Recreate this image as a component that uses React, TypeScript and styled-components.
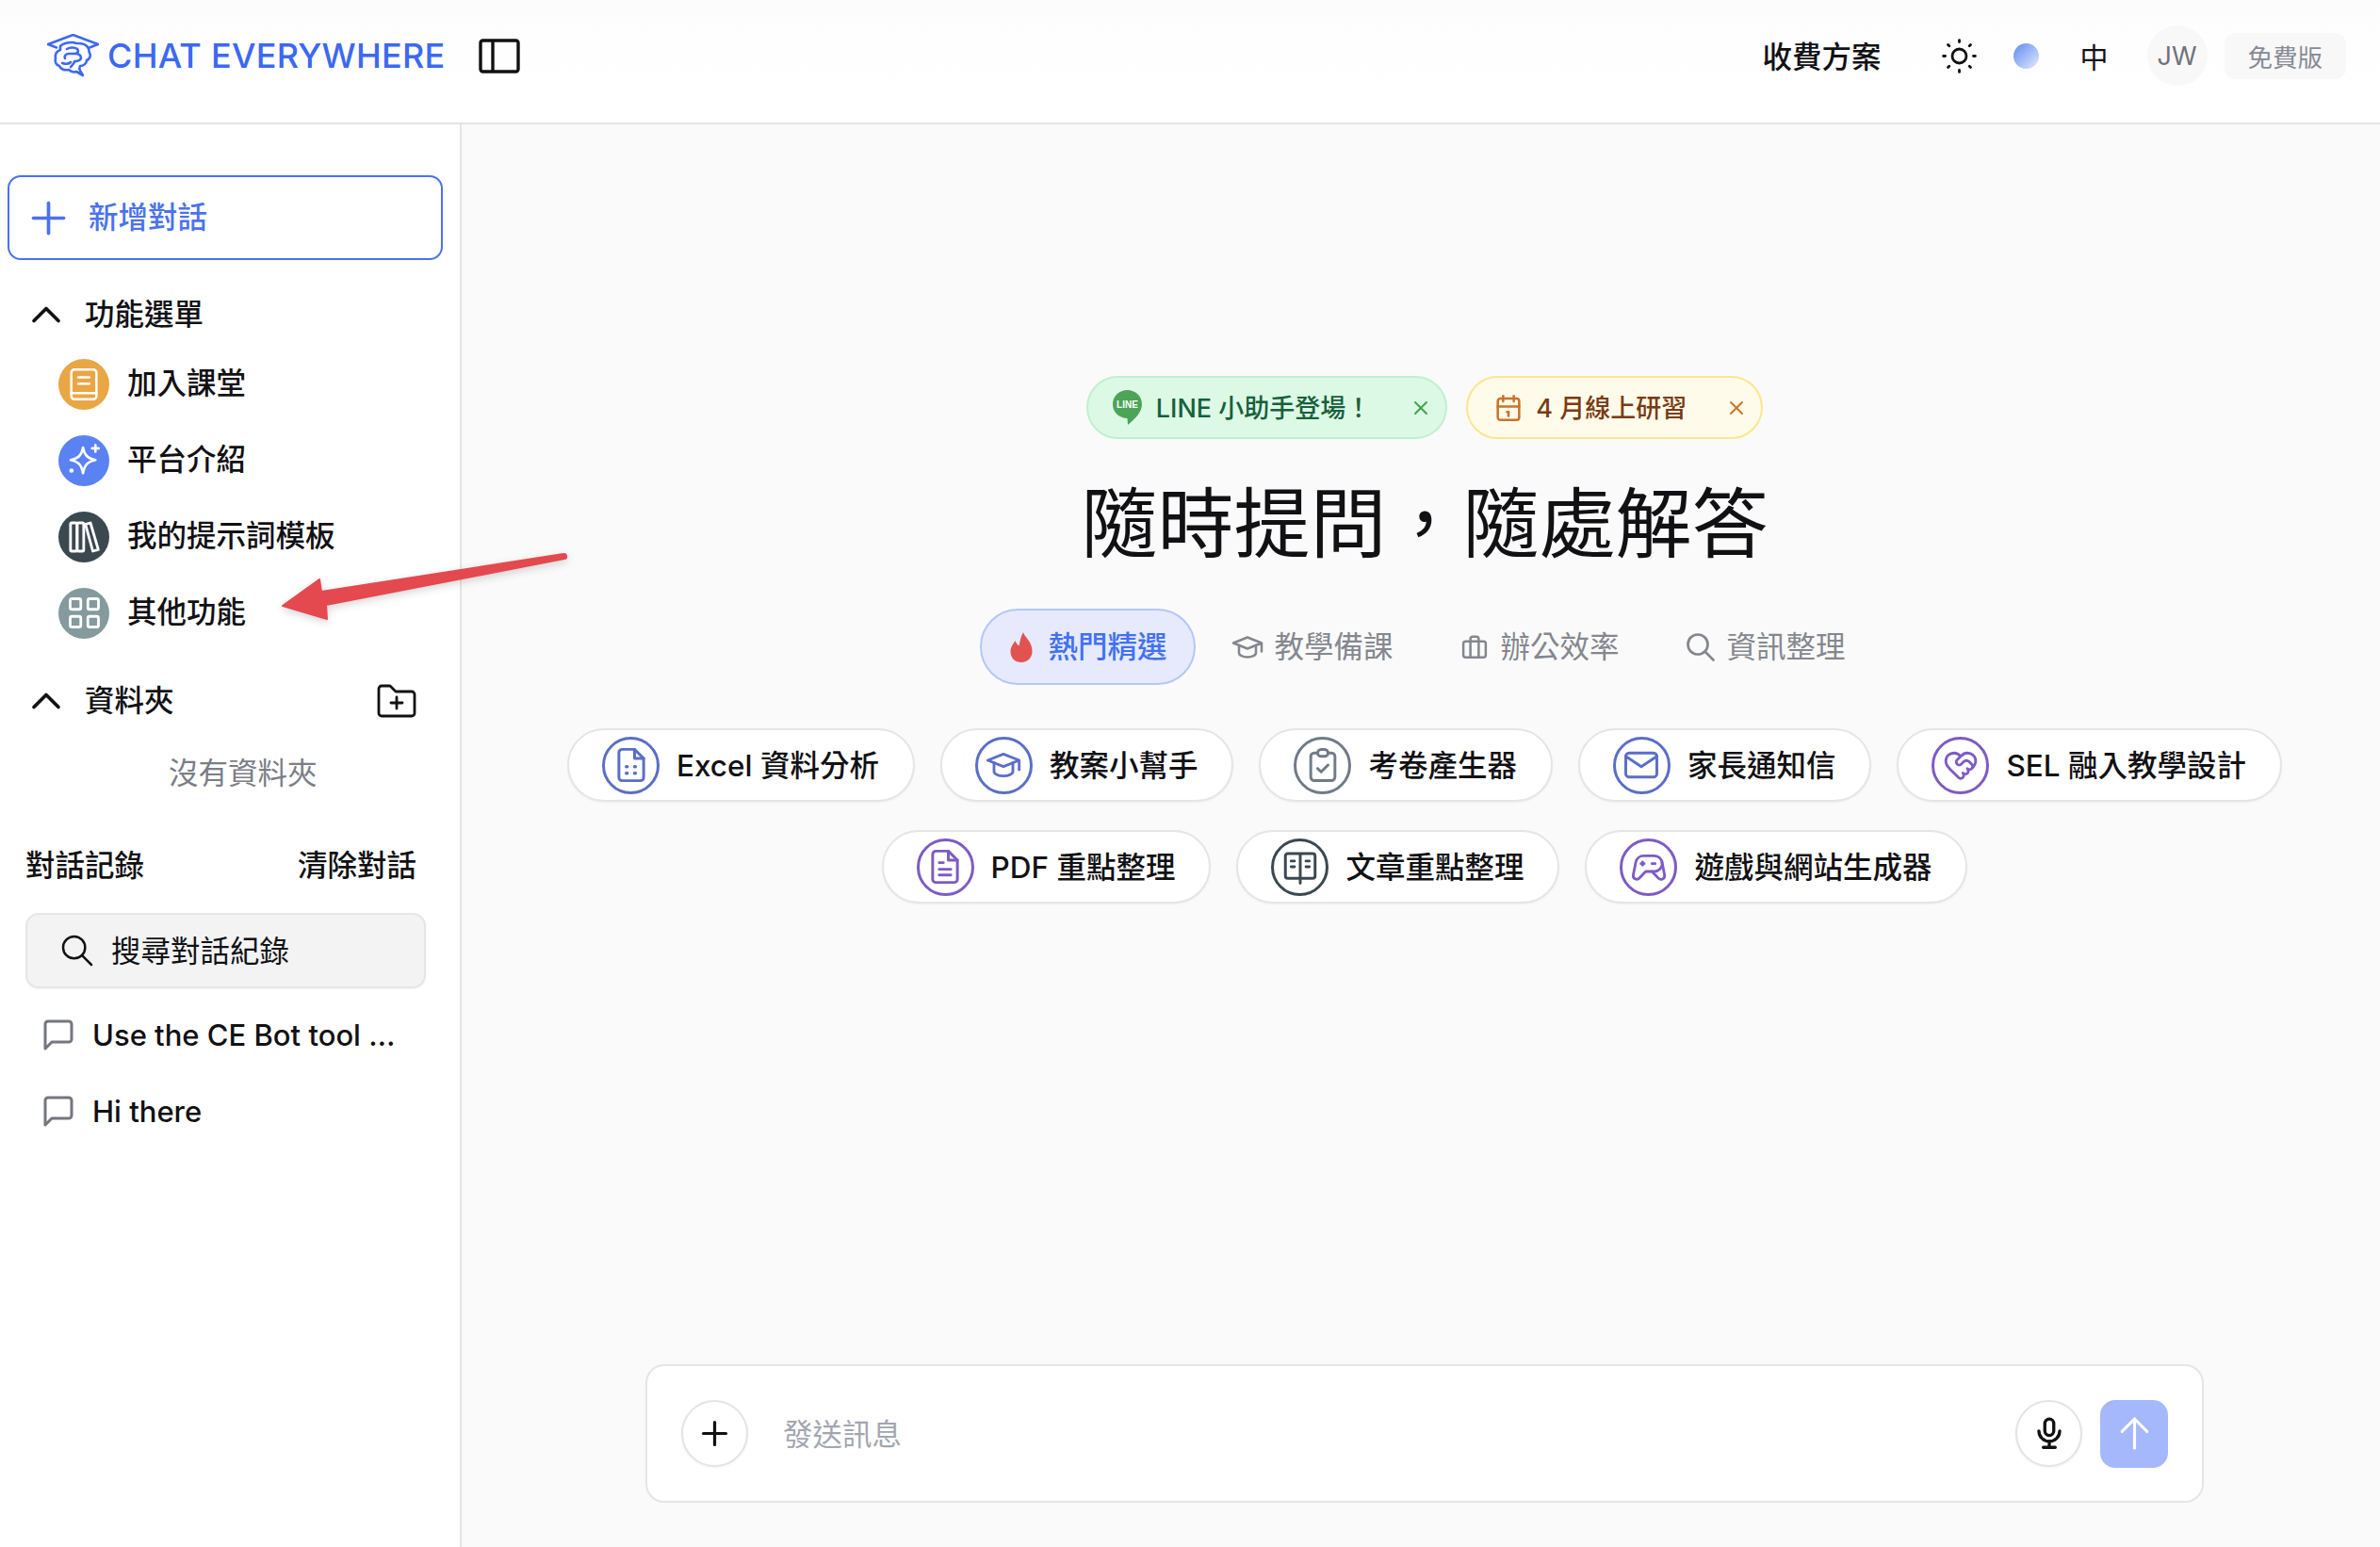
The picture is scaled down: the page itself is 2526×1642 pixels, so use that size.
import React from 'react';
import styled, { createGlobalStyle } from 'styled-components';
import {
  TbPlus,
  TbChevronUp,
  TbSearch,
  TbSun,
  TbX,
  TbCalendar,
  TbSchool,
  TbClipboardCheck,
  TbMail,
  TbDeviceGamepad2,
  TbMicrophone,
  TbArrowUp,
  TbLayoutGrid,
} from 'react-icons/tb';
import { HeartHandshake } from 'lucide-react';

const GlobalStyle = createGlobalStyle`
  html, body, #root { margin: 0; padding: 0; height: 100%; }
  body {
    font-family: Inter, "Noto Sans CJK TC", sans-serif;
    font-size: 31.5px;
    color: #111114;
    background: #fafafa;
    overflow: hidden;
  }
  * { box-sizing: border-box; }
  svg { flex-shrink: 0; }
`;

const Label = styled.span<{ $lift: number }>`
  margin-bottom: ${({ $lift }) => $lift * 2}px;
  white-space: nowrap;
`;

const Page = styled.div`
  display: flex;
  flex-direction: column;
  height: 1642px;
`;

const Header = styled.header`
  flex: 0 0 132px;
  display: flex;
  align-items: center;
  justify-content: space-between;
  padding: 0 36px 12px 50px;
  background: linear-gradient(180deg, #fcfcfc 0%, #fefefe 30%, #ffffff 100%);
  border-bottom: 2px solid #e5e5e5;
`;

const Brand = styled.div`
  display: flex;
  align-items: center;
`;

const LogoText = styled.span`
  margin-left: 9px;
  font-size: 36px;
  font-weight: 500;
  color: #3c68f3;
  letter-spacing: 0.25px;
  white-space: nowrap;
`;

const ToggleIcon = styled.svg`
  margin-left: 35px;
  display: block;
`;

const HeaderRight = styled.div`
  display: flex;
  align-items: center;
`;

const PlanLink = styled(Label)`
  font-weight: 500;
  margin-right: 60px;
`;

const SunWrap = styled.span`
  display: flex;
  margin-right: 35px;
`;

const Dot = styled.span`
  width: 27px;
  height: 27px;
  border-radius: 50%;
  background: linear-gradient(135deg, #5f8bee 0%, #e3eafd 100%);
  margin-right: 44px;
`;

const LangLabel = styled.span`
  font-size: 30px;
  margin-right: 41px;
`;

const Avatar = styled.span`
  width: 64px;
  height: 64px;
  border-radius: 50%;
  background: #f8f8f9;
  color: #70727b;
  font-size: 27px;
  display: flex;
  align-items: center;
  justify-content: center;
  margin-right: 18px;
`;

const PlanBadge = styled.span`
  height: 49px;
  padding: 0 25px;
  border-radius: 12px;
  background: #f8f8f9;
  color: #878a94;
  font-size: 26.5px;
  display: flex;
  align-items: center;
`;

const Body = styled.div`
  flex: 1;
  display: flex;
  min-height: 0;
  position: relative;
`;

const Sidebar = styled.aside`
  flex: 0 0 490px;
  display: flex;
  flex-direction: column;
  padding: 54px 0 0 8px;
  background: #ffffff;
  border-right: 2px solid #e5e5e5;
`;

const NewChatButton = styled.button`
  width: 462px;
  height: 90px;
  display: flex;
  align-items: center;
  gap: 15px;
  padding: 0 0 0 14px;
  background: #fff;
  border: 2.5px solid #4a72ef;
  border-radius: 14px;
  color: #4a72ef;
  font: inherit;
  font-weight: 500;
`;

const SectionRow = styled.div<{ $top: number }>`
  height: 50px;
  margin-top: ${({ $top }) => $top}px;
  display: flex;
  align-items: center;
  gap: 15px;
  padding: 0 24px 0 15px;
  width: 458px;
  font-weight: 500;
`;

const SectionTitle = styled(Label)`
  flex: 1;
`;

const MenuList = styled.div`
  margin-top: 8px;
  display: flex;
  flex-direction: column;
`;

const MenuItem = styled.div`
  height: 81px;
  display: flex;
  align-items: center;
  gap: 19px;
  padding-left: 54px;
  font-weight: 500;
`;

const MenuBadge = styled.span<{ $bg: string }>`
  width: 54px;
  height: 54px;
  border-radius: 50%;
  background: ${({ $bg }) => $bg};
  color: #fff;
  display: flex;
  align-items: center;
  justify-content: center;
`;

const EmptyFolders = styled.div`
  height: 50px;
  margin-top: 26px;
  padding-left: 171px;
  display: flex;
  align-items: center;
  color: #7b7e87;
`;

const HistoryHead = styled.div`
  height: 50px;
  margin-top: 48px;
  width: 434px;
  padding-left: 19px;
  display: flex;
  align-items: center;
  justify-content: space-between;
  font-weight: 500;
`;

const SearchBox = styled.div`
  margin: 26px 0 0 19px;
  width: 425px;
  height: 80px;
  display: flex;
  align-items: center;
  gap: 16px;
  padding-left: 33px;
  background: #f3f3f4;
  border: 2px solid #e6e6e7;
  border-radius: 14px;
  box-shadow: 0 1px 2px rgba(0, 0, 0, 0.05);
`;

const ChatList = styled.div`
  margin-top: 9px;
  display: flex;
  flex-direction: column;
`;

const ChatItem = styled.div`
  height: 81px;
  display: flex;
  align-items: center;
  gap: 20px;
  padding-left: 38px;
`;

const ChatTitle = styled.span`
  font-size: 31px;
  font-weight: 500;
  white-space: nowrap;
`;

const Main = styled.main`
  flex: 1;
  display: flex;
  flex-direction: column;
  align-items: center;
  padding: 267px 0 47px 8px;
  background: #fafafa;
`;

const BannerRow = styled.div`
  display: flex;
  gap: 20px;
`;

const Banner = styled.div<{ $bg: string; $border: string; $fg: string }>`
  height: 67px;
  display: flex;
  align-items: center;
  padding: 0 14px 0 26px;
  border-radius: 34px;
  background: ${({ $bg }) => $bg};
  border: 2px solid ${({ $border }) => $border};
  color: ${({ $fg }) => $fg};
  font-size: 27px;
  font-weight: 500;
`;

const BannerText = styled.span<{ $left: number; $right: number }>`
  margin: 0 ${({ $right }) => $right}px 2px ${({ $left }) => $left}px;
  white-space: nowrap;
`;

const Title = styled.h1`
  margin: 40px 0 0;
  height: 100px;
  line-height: 100px;
  font-size: 81px;
  font-weight: 400;
  color: #111114;
`;

const Tabs = styled.div`
  margin: 40px 0 0 6px;
  display: flex;
  gap: 11px;
`;

const Tab = styled.div<{ $active?: boolean }>`
  height: 81px;
  display: flex;
  align-items: center;
  gap: 13px;
  padding: 0 29px 0 27px;
  border-radius: 41px;
  border: 2px solid ${({ $active }) => ($active ? '#b4c6fa' : 'transparent')};
  background: ${({ $active }) => ($active ? '#e6eafc' : 'transparent')};
  color: ${({ $active }) => ($active ? '#4270f4' : '#85878f')};
  font-weight: ${({ $active }) => ($active ? 500 : 400)};
`;

const TabIcon = styled.span`
  width: 30px;
  display: flex;
  justify-content: center;
`;

const ChipRows = styled.div`
  margin-top: 46px;
  display: flex;
  flex-direction: column;
  gap: 30px;
`;

const ChipRow = styled.div`
  display: flex;
  justify-content: center;
  gap: 27px;
`;

const Chip = styled.div`
  height: 78px;
  display: flex;
  align-items: center;
  gap: 18px;
  padding: 0 36px 0 35px;
  background: #fff;
  border: 2px solid #e5e5e5;
  border-radius: 39px;
  font-weight: 500;
  white-space: nowrap;
  box-shadow: 0 1px 2px rgba(0, 0, 0, 0.05);
`;

const ChipIcon = styled.span<{ $color: string }>`
  width: 61px;
  height: 61px;
  border-radius: 50%;
  border: 3px solid ${({ $color }) => $color};
  color: ${({ $color }) => $color};
  display: flex;
  align-items: center;
  justify-content: center;
`;

const Composer = styled.div`
  margin-top: auto;
  width: 1654px;
  height: 147px;
  display: flex;
  align-items: center;
  padding: 0 36px;
  background: #fff;
  border: 2px solid #e5e5e5;
  border-radius: 20px;
`;

const RoundButton = styled.span`
  width: 71px;
  height: 71px;
  border-radius: 50%;
  border: 2px solid #e4e4e4;
  background: #fff;
  box-shadow: 0 1px 3px rgba(0, 0, 0, 0.06);
  display: flex;
  align-items: center;
  justify-content: center;
`;

const Placeholder = styled(Label)`
  flex: 1;
  margin-left: 37px;
  color: #a3a6b0;
`;

const SendButton = styled.span`
  margin-left: 19px;
  width: 72px;
  height: 72px;
  border-radius: 16px;
  background: #a5b8fb;
  color: #fff;
  display: flex;
  align-items: center;
  justify-content: center;
`;

const Annotation = styled.svg`
  position: absolute;
  left: 290px;
  top: 440px;
  filter: drop-shadow(0 3px 4px rgba(0, 0, 0, 0.16));
`;

const LogoMark = () => (
  <svg width="55" height="46" viewBox="0 0 55 46" fill="none" stroke="#3c68f3" strokeWidth="2.6" strokeLinejoin="round" strokeLinecap="round">
    <path d="M1 11 27.500 1 54 11l-9 3.500M1 11l9 3.500" />
    <path d="M14 13c3-3 8-4 13-4 2 0 3 1 6 1 5 0 8 1 10 4 2 2 1 4 2 6 2 3 0 7-3 8 0 3-3 6-7 6-1 2-1 3 0 5l3 5-7-4c-3 1-6 0-8-2-5 1-9-1-10-4-4-1-5-5-4-8-1-4 1-8 5-9z" />
    <path d="M21 16c3-2 8-2 11 0M32 16c2 2 1 4-2 5l-7 0M23 21c-3 0-5 2-4 5M30 21c4 0 6 2 6 5-1 2-3 3-6 3M16 31c3 1 7 1 9-1M29 29c0 2-2 4-4 6" />
  </svg>
);

const PanelIcon = () => (
  <ToggleIcon width="44" height="37" viewBox="0 0 44 37" fill="none" stroke="#111" strokeWidth="3.4" strokeLinejoin="round">
    <rect x="2" y="2" width="40" height="33" rx="2.500" />
    <path d="M15 2v33" />
  </ToggleIcon>
);

const BookIcon = () => (
  <svg width="40" height="40" viewBox="0 0 24 24" fill="none" stroke="currentColor" strokeWidth="1.5" strokeLinecap="round" strokeLinejoin="round">
    <rect x="4" y="2.500" width="16" height="19" rx="2" />
    <path d="M4 17.500h16M8.500 7.500h7M8.500 11.500h7" />
  </svg>
);

const SparkIcon = () => (
  <svg width="42" height="42" viewBox="0 0 24 24" fill="none" stroke="currentColor" strokeWidth="1.5" strokeLinecap="round" strokeLinejoin="round">
    <path d="M11.500 4c.9 4.600 2.700 6.600 7.500 7.600-4.800 1-6.600 3-7.500 8-.9-5-2.700-7-7.500-8 4.800-1 6.600-3 7.500-7.600z" />
    <path d="M19 2.500v4M17 4.500h4" />
    <circle cx="4.500" cy="18" r=".6" fill="currentColor" />
  </svg>
);

const BooksIcon = () => (
  <svg width="40" height="40" viewBox="0 0 24 24" fill="none" stroke="currentColor" strokeWidth="1.7" strokeLinecap="round" strokeLinejoin="round">
    <rect x="3.500" y="3" width="4.200" height="18" rx=".8" />
    <rect x="7.700" y="3" width="4.200" height="18" rx=".8" />
    <path d="M13 3.800l3.200-.8 5 17-3.500 1z" />
  </svg>
);

const FolderIcon = () => (
  <svg width="42" height="36" viewBox="0 0 42 36" fill="none" stroke="#111" strokeWidth="2.800" strokeLinejoin="round" strokeLinecap="round">
    <path d="M2 5a3 3 0 0 1 3-3h9l6 6h17a3 3 0 0 1 3 3v20a3 3 0 0 1-3 3H5a3 3 0 0 1-3-3z" />
    <path d="M21 14v12M15 20h12" />
  </svg>
);

const ChatBubble = () => (
  <svg width="32" height="34" viewBox="0 0 32 34" fill="none" stroke="#75767f" strokeWidth="3" strokeLinejoin="round">
    <path d="M2 31V5a3 3 0 0 1 3-3h22a3 3 0 0 1 3 3v16a3 3 0 0 1-3 3H9z" />
  </svg>
);

const LineIcon = () => (
  <svg width="31" height="37" viewBox="0 0 31 37">
    <path d="M15.500 0C24 0 31 6.500 31 15c0 9-8 16-15 22l-.5-7C7 30 0 23.500 0 15 0 6.500 7 0 15.500 0z" fill="#4ca456" />
    <text x="15.500" y="19" textAnchor="middle" fontFamily="Liberation Sans, sans-serif" fontSize="10" fontWeight="700" fill="#fff">LINE</text>
  </svg>
);

const FlameIcon = () => (
  <svg width="24" height="32" viewBox="0 0 24 32">
    <path d="M14 0c1 5 9 9 9.500 19.500C24 27 18.500 32 12 32S.5 27.500.5 20.500C.5 15 4 12 5.500 9c1 2.500 2 4.500 4 5.500C10.500 10 11.500 4.500 14 0z" fill="#e2524f" />
  </svg>
);

const CaseIcon = () => (
  <svg width="30" height="30" viewBox="0 0 24 24" fill="none" stroke="currentColor" strokeWidth="2" strokeLinejoin="round">
    <rect x="2.500" y="7" width="19" height="13.500" rx="2" />
    <path d="M8.500 7V5a2 2 0 0 1 2-2h3a2 2 0 0 1 2 2v2M8.500 7v13.500M15.500 7v13.500" />
  </svg>
);

const SheetFileIcon = () => (
  <svg width="42" height="42" viewBox="0 0 24 24" fill="none" stroke="currentColor" strokeWidth="1.7" strokeLinecap="round" strokeLinejoin="round">
    <path d="M14 2.500H6.500a2 2 0 0 0-2 2v15a2 2 0 0 0 2 2h11a2 2 0 0 0 2-2V8z" />
    <path d="M14 2.500V8h5.500" />
    <path d="M9 13h.5M14 13h.5M9 17h.5M14 17h.5" strokeWidth="2" />
  </svg>
);

const TextFileIcon = () => (
  <svg width="42" height="42" viewBox="0 0 24 24" fill="none" stroke="currentColor" strokeWidth="1.7" strokeLinecap="round" strokeLinejoin="round">
    <path d="M14 2.500H6.500a2 2 0 0 0-2 2v15a2 2 0 0 0 2 2h11a2 2 0 0 0 2-2V8z" />
    <path d="M14 2.500V8h5.500" />
    <path d="M8.500 9.500H11M8.500 13.500h7M8.500 17h7" />
  </svg>
);

const OpenBookIcon = () => (
  <svg width="42" height="42" viewBox="0 0 24 24" fill="none" stroke="currentColor" strokeWidth="1.7" strokeLinecap="round" strokeLinejoin="round">
    <path d="M12 19H4.500a1.500 1.500 0 0 1-1.500-1.500v-12A1.500 1.500 0 0 1 4.500 4H12zM12 19h7.500a1.500 1.500 0 0 0 1.500-1.500v-12A1.500 1.500 0 0 0 19.500 4H12zM12 19v3" />
    <path d="M6.500 8.500h2M6.500 12h2M15.500 8.500h2M15.500 12h2" />
  </svg>
);

const features = [
  { label: '加入課堂', bg: '#e9a645', icon: <BookIcon /> },
  { label: '平台介紹', bg: '#5b82f2', icon: <SparkIcon /> },
  { label: '我的提示詞模板', bg: '#3c4850', icon: <BooksIcon /> },
  { label: '其他功能', bg: '#849a9c', icon: <TbLayoutGrid size={45} strokeWidth={1.5} /> },
];

const BLUE = '#5a6ec9';
const PURPLE = '#7d5bc4';

const firstRow = [
  { label: 'Excel 資料分析', color: BLUE, icon: <SheetFileIcon /> },
  { label: '教案小幫手', color: BLUE, icon: <TbSchool size={40} strokeWidth={1.7} /> },
  { label: '考卷產生器', color: '#6f7b87', icon: <TbClipboardCheck size={44} strokeWidth={1.6} /> },
  { label: '家長通知信', color: BLUE, icon: <TbMail size={44} strokeWidth={1.6} /> },
  { label: 'SEL 融入教學設計', color: PURPLE, icon: <HeartHandshake size={38} strokeWidth={1.8} /> },
];

const secondRow = [
  { label: 'PDF 重點整理', color: PURPLE, icon: <TextFileIcon /> },
  { label: '文章重點整理', color: '#3c4850', icon: <OpenBookIcon /> },
  { label: '遊戲與網站生成器', color: PURPLE, icon: <TbDeviceGamepad2 size={40} strokeWidth={1.7} /> },
];

const App = () => (
  <>
    <GlobalStyle />
    <Page>
      <Header>
        <Brand>
          <LogoMark />
          <LogoText>CHAT EVERYWHERE</LogoText>
          <PanelIcon />
        </Brand>
        <HeaderRight>
          <PlanLink $lift={1}>收費方案</PlanLink>
          <SunWrap>
            <TbSun size={45} strokeWidth={1.5} />
          </SunWrap>
          <Dot />
          <LangLabel>中</LangLabel>
          <Avatar>JW</Avatar>
          <PlanBadge>免費版</PlanBadge>
        </HeaderRight>
      </Header>

      <Body>
        <Sidebar>
          <NewChatButton>
            <TbPlus size={55} strokeWidth={1.6} />
            <Label $lift={3}>新增對話</Label>
          </NewChatButton>

          <SectionRow $top={33}>
            <TbChevronUp size={52} strokeWidth={1.7} />
            <SectionTitle $lift={3}>功能選單</SectionTitle>
          </SectionRow>
          <MenuList>
            {features.map((item) => (
              <MenuItem key={item.label}>
                <MenuBadge $bg={item.bg}>{item.icon}</MenuBadge>
                <Label $lift={4}>{item.label}</Label>
              </MenuItem>
            ))}
          </MenuList>

          <SectionRow $top={28}>
            <TbChevronUp size={52} strokeWidth={1.7} />
            <SectionTitle $lift={3}>資料夾</SectionTitle>
            <FolderIcon />
          </SectionRow>
          <EmptyFolders>
            <Label $lift={2}>沒有資料夾</Label>
          </EmptyFolders>

          <HistoryHead>
            <Label $lift={2}>對話記錄</Label>
            <Label $lift={2}>清除對話</Label>
          </HistoryHead>
          <SearchBox>
            <TbSearch size={40} strokeWidth={1.5} />
            <Label $lift={2}>搜尋對話紀錄</Label>
          </SearchBox>
          <ChatList>
            <ChatItem>
              <ChatBubble />
              <ChatTitle>Use the CE Bot tool …</ChatTitle>
            </ChatItem>
            <ChatItem>
              <ChatBubble />
              <ChatTitle>Hi there</ChatTitle>
            </ChatItem>
          </ChatList>
        </Sidebar>

        <Main>
          <BannerRow>
            <Banner $bg="#dcf9e6" $border="#bff0cf" $fg="#17603a">
              <LineIcon />
              <BannerText $left={15} $right={41}>LINE 小助手登場！</BannerText>
              <TbX size={24} color="#3fa34d" strokeWidth={2} />
            </Banner>
            <Banner $bg="#fffbeb" $border="#fde68a" $fg="#7a3b12">
              <TbCalendar size={34} color="#c9742a" strokeWidth={1.8} />
              <BannerText $left={12} $right={41}>4 月線上研習</BannerText>
              <TbX size={24} color="#c9742a" strokeWidth={2} />
            </Banner>
          </BannerRow>

          <Title>隨時提問，隨處解答</Title>

          <Tabs>
            <Tab $active>
              <TabIcon>
                <FlameIcon />
              </TabIcon>
              <Label $lift={3}>熱門精選</Label>
            </Tab>
            <Tab>
              <TabIcon>
                <TbSchool size={36} strokeWidth={1.7} />
              </TabIcon>
              <Label $lift={3}>教學備課</Label>
            </Tab>
            <Tab>
              <TabIcon>
                <CaseIcon />
              </TabIcon>
              <Label $lift={3}>辦公效率</Label>
            </Tab>
            <Tab>
              <TabIcon>
                <TbSearch size={36} strokeWidth={1.8} />
              </TabIcon>
              <Label $lift={3}>資訊整理</Label>
            </Tab>
          </Tabs>

          <ChipRows>
            <ChipRow>
              {firstRow.map((chip) => (
                <Chip key={chip.label}>
                  <ChipIcon $color={chip.color}>{chip.icon}</ChipIcon>
                  <Label $lift={2}>{chip.label}</Label>
                </Chip>
              ))}
            </ChipRow>
            <ChipRow>
              {secondRow.map((chip) => (
                <Chip key={chip.label}>
                  <ChipIcon $color={chip.color}>{chip.icon}</ChipIcon>
                  <Label $lift={2}>{chip.label}</Label>
                </Chip>
              ))}
            </ChipRow>
          </ChipRows>

          <Composer>
            <RoundButton>
              <TbPlus size={41} strokeWidth={1.9} />
            </RoundButton>
            <Placeholder $lift={2}>發送訊息</Placeholder>
            <RoundButton>
              <TbMicrophone size={38} strokeWidth={2.1} />
            </RoundButton>
            <SendButton>
              <TbArrowUp size={53} strokeWidth={1.4} />
            </SendButton>
          </Composer>
        </Main>

        <Annotation width="320" height="100" viewBox="0 0 320 100">
          <path d="M10 71 49 43 51 56 308 16a2.500 2.500 0 0 1 1 5L56 70l1 15z" fill="#e4494f" stroke="#e4494f" strokeWidth="2" strokeLinejoin="round" />
        </Annotation>
      </Body>
    </Page>
  </>
);

export default App;
